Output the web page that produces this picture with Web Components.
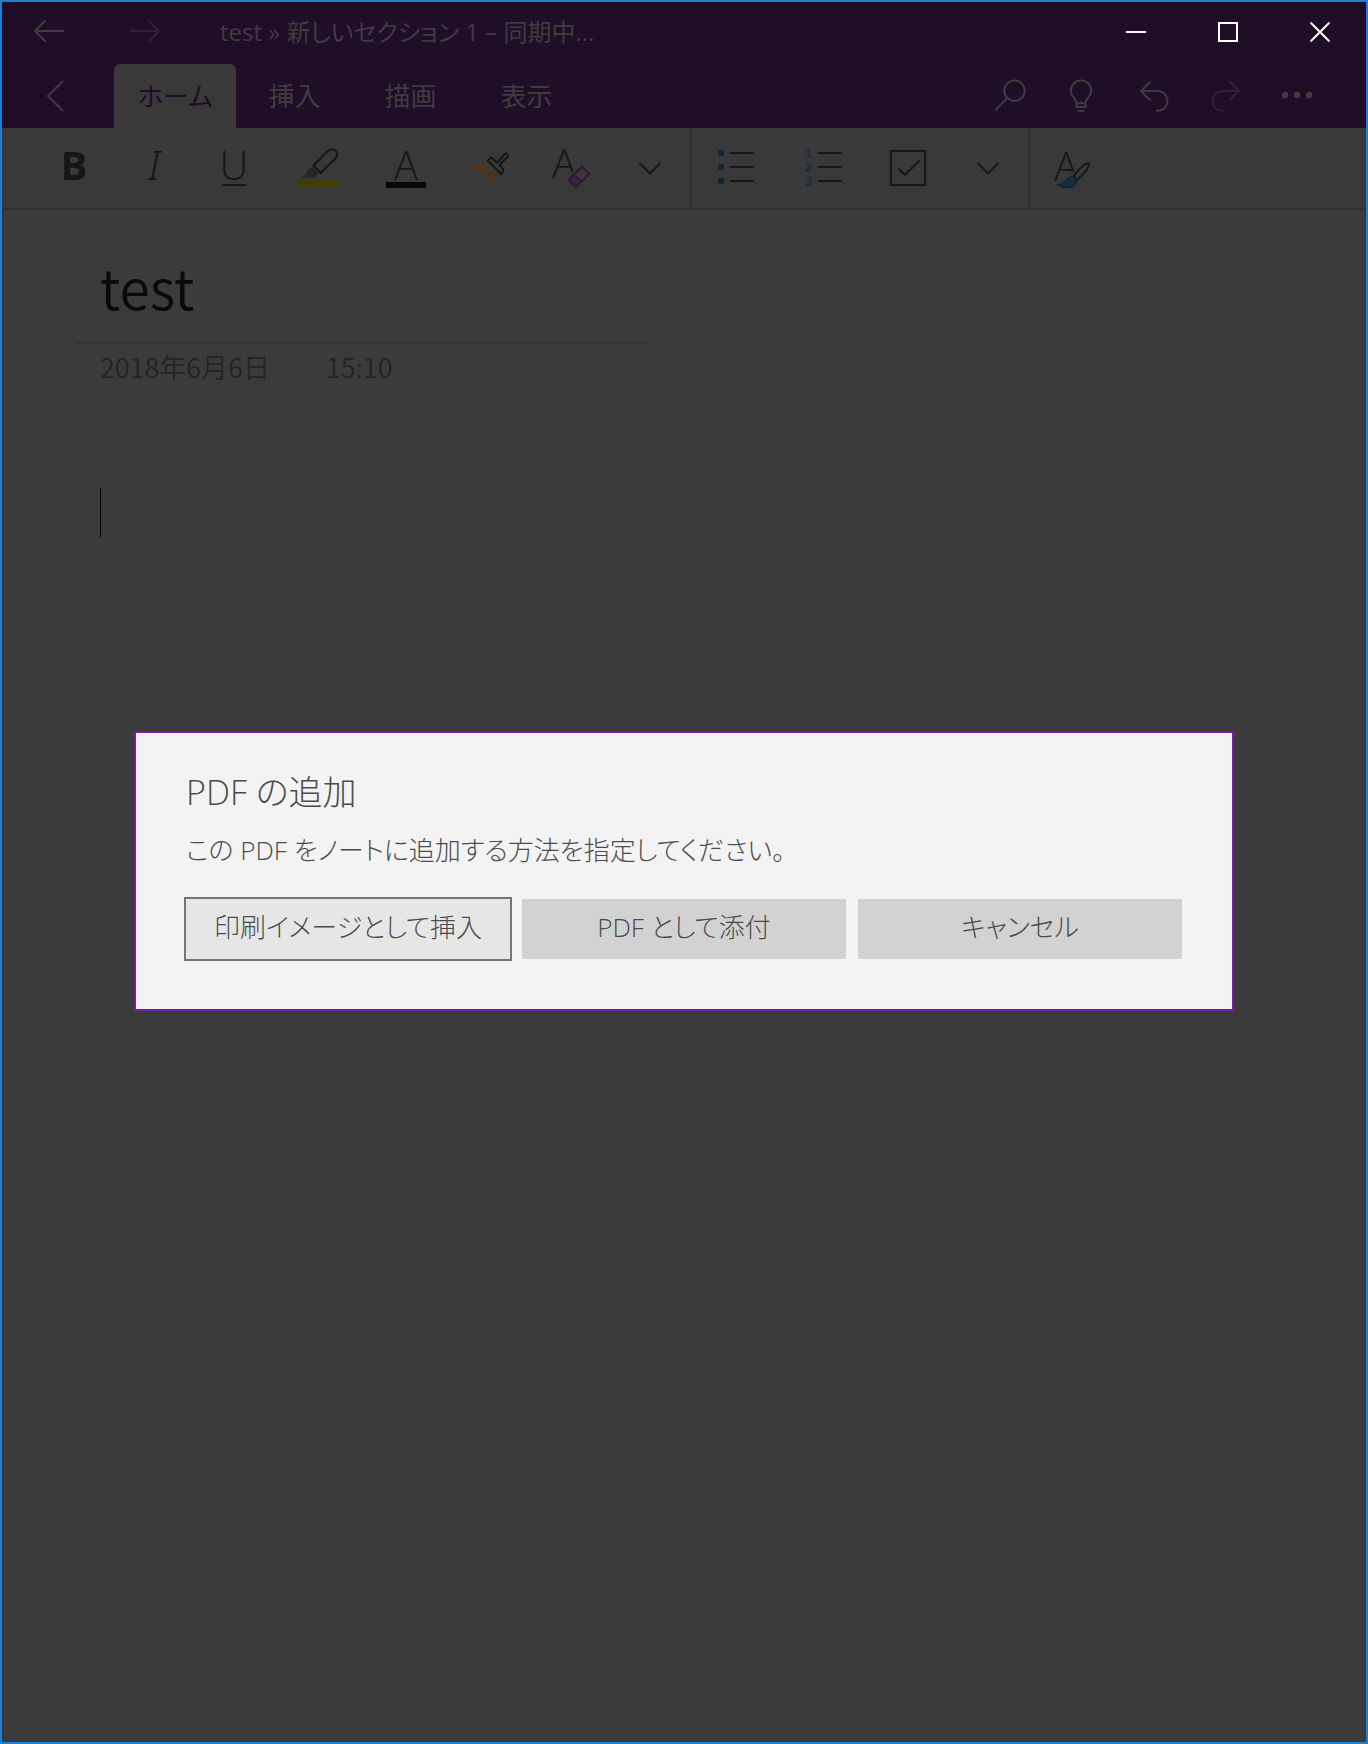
<!DOCTYPE html>
<html lang="ja">
<head>
<meta charset="utf-8">
<title>test</title>
<style>
html, body {
  height: 100%;
  margin: 0;
}
body {
  font-family: "Open Sans", "Noto Sans CJK JP", sans-serif;
  font-feature-settings: "palt";
  background: #3b3b3b;
}
</style>
</head>
<body>
<note-window>
  <title-bar slot="bar">test » 新しいセクション 1 – 同期中...</title-bar>
  <ribbon-tabs slot="bar" tabs="ホーム,挿入,描画,表示"></ribbon-tabs>
  <format-bar slot="bar"></format-bar>
  <note-page date="2018年6月6日" time="15:10">test</note-page>
  <choice-dialog slot="dialog" heading="PDF の追加" message="この PDF をノートに追加する方法を指定してください。">
    <choice-button focused>印刷イメージとして挿入</choice-button>
    <choice-button>PDF として添付</choice-button>
    <choice-button>キャンセル</choice-button>
  </choice-dialog>
</note-window>

<script>
// every glyph is drawn in a 40x40 box
const icons = {
  back: '<path d="M34 18H5M15.500 7.500 5 18l10.500 10.500"/>',
  forward: '<path d="M4 18h29M22.500 7.500 33 18 22.500 28.500"/>',
  minimize: '<path d="M10 19h20"/>',
  maximize: '<path d="M11 10h18v18H11z"/>',
  close: '<path d="M10.500 9.500l19 19M29.500 9.500l-19 19"/>',
  previous: '<path d="M25 5 10 20l15 15"/>',
  search: '<circle cx="25.500" cy="14.700" r="10.200"/><path d="M18.200 22 6.300 34.400"/>',
  bulb: '<path d="M15.500 31V27C15.500 22.500 9.700 21 9.700 14.800a10.300 10.300 0 0 1 20.600 0C30.300 21 24.500 22.500 24.500 27v4zM15.500 27h9M17 35h6"/>',
  undo: '<path d="M8 15h16.500a9.900 9.900 0 0 1 0 19.800H23M17.500 5.500 8 15l9.500 9.500"/>',
  redo: '<path d="M34 15H17.500a9.900 9.900 0 0 0 0 19.800H19M24.500 5.500 34 15l-9.500 9.500"/>',
  more: '<g fill="currentColor" stroke="none"><circle cx="8" cy="19" r="3.200"/><circle cx="20" cy="19" r="3.200"/><circle cx="32" cy="19" r="3.200"/></g>',
  bold: '<text x="20" y="32" class="mid bold">B</text>',
  italic: '<text x="20" y="32" class="mid italic">I</text>',
  underline: '<text x="20" y="32" class="mid">U</text><path d="M8 37h24"/>',
  highlight: '<path d="M0 32.500h40V40H0z" fill="#3f3d05" stroke="none"/><path d="M14 18.500 9.500 23 8.500 26 3 29.700h14.500l1.500-3.200 2.500-1z" fill="#262626" stroke="none"/><path d="M15.500 17.500 30 2.800a5.200 5.200 0 0 1 7.700 7.500L22.800 24.800z"/>',
  color: '<text x="20" y="32" class="mid">A</text><path d="M0 34h40v6H0z" fill="#080808" stroke="none"/>',
  painter: '<path d="M9 21 30 26.500 20.300 33.700z" fill="#3f3621" stroke="none"/><path d="M17.500 13C13 16.500 9 17.500 4.500 18L20.300 33.500 30.500 26 4.500 18" stroke="#54331c"/><path d="M17.700 12.700 20 10.300q1.500-1 3 .500l4.200 4 7.300-8.500q1.500-1.500 2.800 0t-.300 3L29.500 17l3.500 4q1 1.200 0 2.500l-2 2.500z" fill="#393939"/>',
  clear: '<text x="2" y="30">A</text><path d="M32 15 42 26 26 42 15 31.300z" fill="#393939" stroke="none"/><path d="M24 26.500 18.500 31.800 26 39l5.500-5.500z" fill="#35243a" stroke="none"/><g stroke="#321638"><path d="M32 18.500 39 26 26 39l-7.500-7.200zM24 26.500l7.500 7"/></g>',
  down: '<path d="M9.500 15 20 25.500 30.500 15"/>',
  bullets: '<path d="M2 2h6v6H2zM2 16h6v6H2zM2 30h6v6H2z" fill="#0f2836" stroke="none"/><path d="M14 5h24M14 19h24M14 33h24"/>',
  numbers: '<g class="small"><text x="1" y="10">1</text><text x="1" y="24">2</text><text x="1" y="38">3</text></g><path d="M14 5h24M14 19h24M14 33h24"/>',
  check: '<path d="M3 3h34v34H3z"/><path d="M10.500 20.700 17 26.800 31.500 12.500"/>',
  styles: '<text x="0" y="33">A</text><path d="M23 20 34 30 22 41 12 32z" fill="#393939" stroke="none"/><path d="M20 27.500C25 20.500 32 14.500 34.800 15.300 36 18.500 29 27.500 23 32z" fill="#393939"/><path d="M4.500 36.800C10 36.500 11.500 33.500 13.500 31 16 28 20.500 28.500 22 31.500 23 35.500 19.500 39.500 15 39.300 10.500 39.500 7 38.500 4.500 36.800z" fill="#1d2c38" stroke="#10273a"/>'
}

class GlyphIcon extends HTMLElement {
  constructor() {
    super()
    this.attachShadow({ mode: 'open' })
  }

  connectedCallback() {
    this.shadowRoot.innerHTML = /*html*/`
      <style>
        :host {
          display: block;
          width: 40px;
          height: 40px;
        }
        svg {
          display: block;
          overflow: visible;
          fill: none;
          stroke: currentColor;
          stroke-width: 2px;
        }
        text {
          font: 350 40px "Open Sans", sans-serif;
          fill: currentColor;
          stroke: none;
        }
        .mid { text-anchor: middle; }
        .bold { font-weight: 700; }
        .italic { font-family: "Noto Sans", sans-serif; font-style: italic; }
        .small text {
          font: 700 12px "Liberation Sans", sans-serif;
          fill: #13303f;
        }
      </style>
      <svg width="40" height="40" viewBox="0 0 40 40" aria-hidden="true">${icons[this.getAttribute('name')]}</svg>
    `
  }
}

// shared by the bars, each shadow root gets its own copy
const buttonStyle = /*css*/`
  button {
    display: flex;
    align-items: center;
    justify-content: center;
    height: 100%;
    padding: 0;
    border: none;
    color: inherit;
    background: none;
    font: inherit;
    font-feature-settings: inherit;
  }
`

const iconButton = (name, label, cls = '') =>
  `<button class="${cls}" aria-label="${label}"><glyph-icon name="${name}"></glyph-icon></button>`


class NoteWindow extends HTMLElement {
  constructor() {
    super()
    this.attachShadow({ mode: 'open' }).innerHTML = /*html*/`
      <style>
        :host {
          display: flex;
          flex-direction: column;
          position: relative;
          box-sizing: border-box;
          min-height: 100%;
          border: 2px solid #1b80d6;
          background: #3b3b3b;
        }
        .overlay {
          position: absolute;
          inset: 0;
          display: flex;
          align-items: center;
          justify-content: center;
          padding: 0 132px 2px;
        }
      </style>
      <slot name="bar"></slot>
      <slot></slot>
      <div class="overlay"><slot name="dialog"></slot></div>
    `
  }
}

class TitleBar extends HTMLElement {
  constructor() {
    super()
    this.attachShadow({ mode: 'open' }).innerHTML = /*html*/`
      <style>
        :host {
          display: flex;
          align-items: center;
          height: 62px;
          color: #3f3c40;
          background: #200d27;
          font-size: 24px;
          line-height: 36px;
        }
        ${buttonStyle}
        .nav { width: 96px; }
        .dim { color: #30213a; }
        .caption {
          flex: 1;
          margin-left: 26px;
          padding-bottom: 2px;
          white-space: nowrap;
        }
        .control {
          width: 92px;
          color: #fff;
        }
      </style>
      ${iconButton('back', '戻る', 'nav')}
      ${iconButton('forward', '進む', 'nav dim')}
      <span class="caption"><slot></slot></span>
      ${iconButton('minimize', '最小化', 'control')}
      ${iconButton('maximize', '最大化', 'control')}
      ${iconButton('close', '閉じる', 'control')}
    `
  }
}

class RibbonTabs extends HTMLElement {
  constructor() {
    super()
    this.attachShadow({ mode: 'open' })
  }

  connectedCallback() {
    const tabs = this.getAttribute('tabs').split(',')
    this.shadowRoot.innerHTML = /*html*/`
      <style>
        :host {
          display: flex;
          height: 64px;
          padding-right: 33px;
          color: #3f3c40;
          background: #200d27;
          font-size: 26px;
        }
        ${buttonStyle}
        .previous { width: 112px; }
        .tabs {
          display: flex;
          flex: 1;
        }
        .tabs button { padding: 0 32px 2px; }
        .tabs button[aria-selected=true] {
          padding: 0 24px 2px;
          border-radius: 6px 6px 0 0;
          color: #200d27;
          background: #393939;
        }
        .tool { width: 72px; }
        .dim { color: #30213a; }
      </style>
      ${iconButton('previous', '前へ', 'previous')}
      <div class="tabs" role="tablist">
        ${tabs.map((tab, i) => `<button role="tab" aria-selected="${i === 0}">${tab}</button>`).join('')}
      </div>
      ${iconButton('search', '検索', 'tool')}
      ${iconButton('bulb', '操作アシスト', 'tool')}
      ${iconButton('undo', '元に戻す', 'tool')}
      ${iconButton('redo', 'やり直し', 'tool dim')}
      ${iconButton('more', 'その他', 'tool')}
    `
  }
}

class FormatBar extends HTMLElement {
  constructor() {
    super()
    this.attachShadow({ mode: 'open' }).innerHTML = /*html*/`
      <style>
        :host {
          display: flex;
          height: 80px;
          border-bottom: 2px solid #303030;
          color: #161616;
          background: #393939;
        }
        ${buttonStyle}
        button { width: 80px; }
        .wide { width: 88px; }
        .group {
          display: flex;
          border-right: 2px solid #303030;
        }
        .group:first-of-type { padding-left: 32px; }
        .group:last-of-type { border: none; }
      </style>
      <div class="group">
        ${iconButton('bold', '太字')}
        ${iconButton('italic', '斜体')}
        ${iconButton('underline', '下線')}
        ${iconButton('highlight', '蛍光ペン', 'wide')}
        ${iconButton('color', 'フォントの色', 'wide')}
        ${iconButton('painter', '書式のコピー')}
        ${iconButton('clear', '書式のクリア')}
        ${iconButton('down', 'フォントの書式')}
      </div>
      <div class="group">
        ${iconButton('bullets', '箇条書き', 'wide')}
        ${iconButton('numbers', '段落番号', 'wide')}
        ${iconButton('check', 'タスク')}
        ${iconButton('down', '段落の書式')}
      </div>
      <div class="group">
        ${iconButton('styles', 'スタイル', 'wide')}
      </div>
    `
  }
}

class NotePage extends HTMLElement {
  constructor() {
    super()
    this.attachShadow({ mode: 'open' })
  }

  connectedCallback() {
    this.shadowRoot.innerHTML = /*html*/`
      <style>
        :host {
          display: block;
          flex: 1;
          padding: 44px 71px;
          border-left: 2px solid #363636;
          font-family: "Noto Sans CJK JP", sans-serif;
          font-weight: 350;
          font-feature-settings: normal;
        }
        header { max-width: 575px; }
        h1 {
          margin: 0;
          padding: 0 25px 24px;
          border-bottom: 2px solid #343434;
          color: #0a0a0a;
          font-size: 55px;
          font-weight: 350;
          line-height: 64px;
        }
        .stamp {
          display: flex;
          gap: 56px;
          padding: 3px 25px 0;
          color: #242424;
          font-size: 27px;
          line-height: 40px;
        }
        .caret {
          width: 1px;
          height: 49px;
          margin: 101px 25px 0;
          background: #000;
        }
      </style>
      <header>
        <h1><slot></slot></h1>
        <div class="stamp">
          <span>${this.getAttribute('date')}</span>
          <span>${this.getAttribute('time')}</span>
        </div>
      </header>
      <div class="caret"></div>
    `
  }
}

class ChoiceDialog extends HTMLElement {
  constructor() {
    super()
    this.attachShadow({ mode: 'open' })
  }

  connectedCallback() {
    this.setAttribute('role', 'dialog')
    this.shadowRoot.innerHTML = /*html*/`
      <style>
        :host {
          display: block;
          flex: 1;
          padding: 35px 50px 50px;
          border: 2px solid #7719aa;
          color: #4b4b4b;
          background: #f3f3f3;
          font-weight: 300;
        }
        h2 {
          margin: 0;
          font-size: 34px;
          font-weight: 300;
          line-height: 48px;
        }
        p {
          margin: 14px 0 29px;
          font-size: 26px;
          line-height: 40px;
        }
        .choices {
          display: grid;
          grid-template-columns: repeat(3, 1fr);
          gap: 12px;
        }
      </style>
      <h2>${this.getAttribute('heading')}</h2>
      <p>${this.getAttribute('message')}</p>
      <div class="choices"><slot></slot></div>
    `
  }
}

class ChoiceButton extends HTMLElement {
  constructor() {
    super()
    this.attachShadow({ mode: 'open' }).innerHTML = /*html*/`
      <style>
        :host { display: block; }
        button {
          width: 100%;
          height: 60px;
          padding: 0 0 6px;
          border: none;
          color: inherit;
          background: #d2d2d2;
          font: inherit;
          font-size: 26px;
          font-feature-settings: inherit;
          white-space: nowrap;
        }
        :host([focused]) button {
          outline: 2px solid #757575;
          background: #e6e6e6;
        }
      </style>
      <button><slot></slot></button>
    `
  }
}

customElements.define('glyph-icon', GlyphIcon)
customElements.define('note-window', NoteWindow)
customElements.define('title-bar', TitleBar)
customElements.define('ribbon-tabs', RibbonTabs)
customElements.define('format-bar', FormatBar)
customElements.define('note-page', NotePage)
customElements.define('choice-dialog', ChoiceDialog)
customElements.define('choice-button', ChoiceButton)
</script>
</body>
</html>
